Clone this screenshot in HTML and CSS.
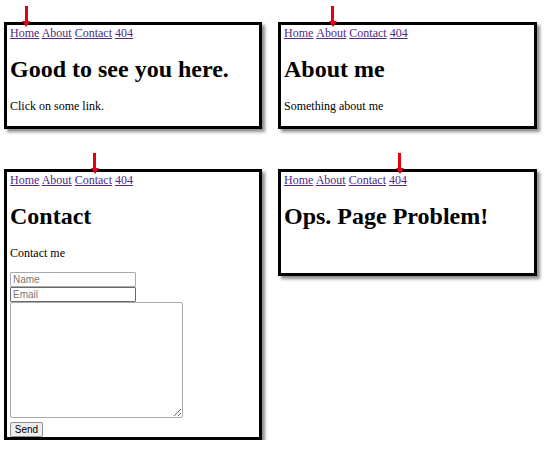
FILE: index.html
```
<!DOCTYPE html>
<html lang="en">
<head>
    <meta charset="UTF-8">
    <meta name="viewport" content="width=device-width, initial-scale=1.0">
    <title>Router Pages</title>
    <link rel="stylesheet" href="styles.css">
</head>
<body>

    <div class="screens">

        <!-- Home -->
        <div class="screen">
            <nav class="menu">
                <a href="#" class="current">Home</a> <a href="#">About</a> <a href="#">Contact</a> <a href="#">404</a>
            </nav>
            <h1>Good to see you here.</h1>
            <p>Click on some link.</p>
        </div>

        <!-- About -->
        <div class="screen">
            <nav class="menu">
                <a href="#">Home</a> <a href="#" class="current">About</a> <a href="#">Contact</a> <a href="#">404</a>
            </nav>
            <h1>About me</h1>
            <p>Something about me</p>
        </div>

        <!-- Contact -->
        <div class="screen">
            <nav class="menu">
                <a href="#">Home</a> <a href="#">About</a> <a href="#" class="current">Contact</a> <a href="#">404</a>
            </nav>
            <h1>Contact</h1>
            <p>Contact me</p>
            <form class="contact-form">
                <input type="text" placeholder="Name">
                <input type="text" placeholder="Email" class="dark">
                <textarea></textarea>
                <button type="button">Send</button>
            </form>
        </div>

        <!-- 404 -->
        <div class="screen">
            <nav class="menu">
                <a href="#">Home</a> <a href="#">About</a> <a href="#">Contact</a> <a href="#" class="current">404</a>
            </nav>
            <h1>Ops. Page Problem!</h1>
        </div>

    </div>

</body>
</html>
```

FILE: styles.css
```
/* Four screenshots of the same little router app */
body {
    margin: 0;
    padding: 22px 0 0 4px;
    background-color: #fff;
    font-family: "Liberation Serif", "Times New Roman", serif;
    font-size: 12px;
    color: #000;
}

.screens {
    display: grid;
    grid-template-columns: 258px 259px;
    column-gap: 16px;
    row-gap: 40px;
    align-items: start;
}

.screen {
    border: 3px solid #000;
    min-height: 100px;
    padding: 1px 3px 0 3px;
    box-shadow: 3px 3px 3px rgba(0, 0, 0, 0.45);
    background-color: #fff;
}

.menu {
    line-height: 14px;
}

.menu a {
    color: #4f2a86;
    position: relative;
}

/* red marker pointing at the active link */
.menu a.current::before {
    content: "";
    position: absolute;
    left: 50%;
    top: -20px;
    width: 3px;
    height: 16px;
    margin-left: 0;
    background-color: #e3000f;
    z-index: 1;
}

.menu a.current::after {
    content: "";
    position: absolute;
    left: 50%;
    top: -5px;
    margin-left: -2.5px;
    border-left: 4px solid transparent;
    border-right: 4px solid transparent;
    border-top: 6px solid #e3000f;
    z-index: 1;
}

h1 {
    font-size: 24px;
    margin: 16px 0;
}

p {
    margin: 12px 0;
}

.contact-form {
    display: flex;
    flex-direction: column;
    align-items: flex-start;
    margin-top: -1px;
}

.contact-form input {
    box-sizing: border-box;
    width: 126px;
    height: 15px;
    margin: 0;
    padding: 0 2px;
    border: 1px solid #a9a9a9;
    border-radius: 1px;
    font-family: "Liberation Sans", Arial, sans-serif;
    font-size: 10px;
}

.contact-form input.dark {
    border-color: #6b6b6b;
}

.contact-form input::placeholder {
    color: #777;
}

.contact-form textarea {
    box-sizing: border-box;
    width: 173px;
    height: 116px;
    margin: 0 0 4px 0;
    border: 1px solid #a9a9a9;
    border-radius: 2px;
}

.contact-form button {
    box-sizing: border-box;
    width: 33px;
    height: 15px;
    padding: 0;
    border: 1px solid #8f8f8f;
    border-radius: 2px;
    background-color: #efefef;
    font-family: "Liberation Sans", Arial, sans-serif;
    font-size: 10px;
    color: #000;
}
```
